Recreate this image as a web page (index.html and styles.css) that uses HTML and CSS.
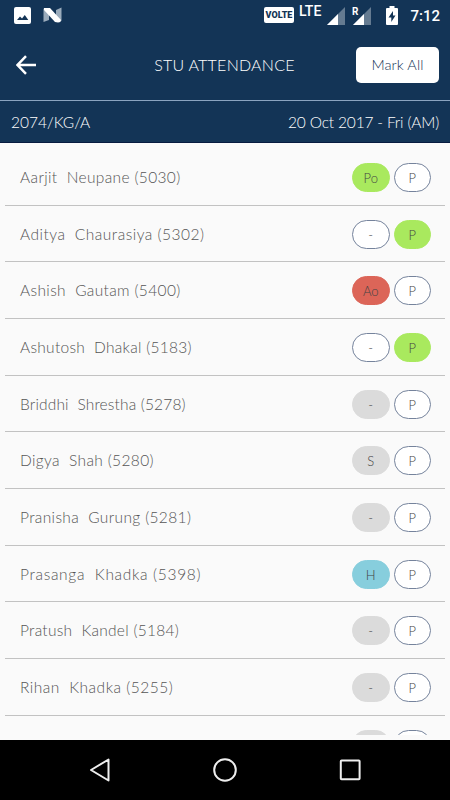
FILE: index.html
```html
<!DOCTYPE html>
<html lang="en">
<head>
  <meta charset="UTF-8">
  <meta name="viewport" content="width=device-width, initial-scale=1.0">
  <title>Stu Attendance</title>
  <link rel="stylesheet" href="styles.css">
</head>
<body>
  <div class="status-bar">
    <svg class="picture-icon" width="17" height="17" viewBox="0 0 17 17">
      <rect width="17" height="17" rx="2" fill="#fff"/>
      <path d="M3 13 L6 9.5 L8 11.5 L10.8 8 L14.3 13 Z" fill="#133456"/>
    </svg>
    <svg class="n-icon" width="19" height="16" viewBox="0 0 19 16">
      <path d="M0.5 1.5 L6 5 V13 L0.5 15 Z M13 3 L18.5 0.5 V14 L13 11 Z" fill="#9aabbb"/>
      <path d="M1 1 H7 L18 13 Q18 15.5 15 15.5 L12 15 L1 3 Z" fill="#fff"/>
    </svg>
    <span class="volte">VOLTE</span>
    <span class="lte">LTE</span>
    <svg class="signal" width="18" height="18" viewBox="0 0 18 18">
      <path d="M18 0 V18 H0 Z" fill="#657b91"/>
      <path d="M11 7 V18 H0 Z" fill="#fff"/>
    </svg>
    <div class="roaming">
      <svg width="18" height="18" viewBox="0 0 18 18">
        <path d="M18 0 V18 H0 Z" fill="#657b91"/>
        <path d="M11 7 V18 H0 Z" fill="#fff"/>
      </svg>
      <span>R</span>
    </div>
    <svg class="battery" width="12" height="19" viewBox="0 0 12 19">
      <path d="M3.5 0 H8.5 V2 H11 Q12 2 12 3 V18 Q12 19 11 19 H1 Q0 19 0 18 V3 Q0 2 1 2 H3.5 Z" fill="#fff"/>
      <path d="M7 5 L2.5 11.5 H5.3 V16 L9.5 9.5 H7 Z" fill="#133456"/>
    </svg>
    <span class="clock">7:12</span>
  </div>

  <div class="toolbar">
    <svg class="back" width="20" height="20" viewBox="0 0 20 20">
      <path d="M10 1.2 L1.5 10 L10 18.8 M1.5 10 H20" fill="none" stroke="#fff" stroke-width="2.5"/>
    </svg>
    <h1>STU ATTENDANCE</h1>
    <button class="mark-all">Mark All</button>
  </div>

  <div class="class-bar">
    <span class="class-name">2074/KG/A</span>
    <span class="date">20 Oct 2017 - Fri (AM)</span>
  </div>

  <div class="list">
    <div class="student"><span class="name">Aarjit  Neupane (5030)</span><span class="pill green">Po</span><span class="pill">P</span></div>
    <div class="student"><span class="name wide">Aditya  Chaurasiya (5302)</span><span class="pill">-</span><span class="pill green">P</span></div>
    <div class="student"><span class="name">Ashish  Gautam (5400)</span><span class="pill red">Ao</span><span class="pill">P</span></div>
    <div class="student"><span class="name tight">Ashutosh  Dhakal (5183)</span><span class="pill">-</span><span class="pill green">P</span></div>
    <div class="student"><span class="name tighter">Briddhi  Shrestha (5278)</span><span class="pill grey">-</span><span class="pill">P</span></div>
    <div class="student"><span class="name">Digya  Shah (5280)</span><span class="pill grey">S</span><span class="pill">P</span></div>
    <div class="student"><span class="name">Pranisha  Gurung (5281)</span><span class="pill grey">-</span><span class="pill">P</span></div>
    <div class="student"><span class="name wider">Prasanga  Khadka (5398)</span><span class="pill blue">H</span><span class="pill">P</span></div>
    <div class="student"><span class="name tight">Pratush  Kandel (5184)</span><span class="pill grey">-</span><span class="pill">P</span></div>
    <div class="student"><span class="name wide">Rihan  Khadka (5255)</span><span class="pill grey">-</span><span class="pill">P</span></div>
    <div class="student"><span class="name"></span><span class="pill grey"></span><span class="pill"></span></div>
  </div>

  <div class="nav-bar">
    <svg width="24" height="26" viewBox="0 0 24 26">
      <path d="M20.5 2.5 V23.5 L3 13 Z" fill="none" stroke="#eee" stroke-width="2" stroke-linejoin="round"/>
    </svg>
    <svg width="24" height="26" viewBox="0 0 24 26">
      <circle cx="12" cy="13" r="10.8" fill="none" stroke="#eee" stroke-width="2"/>
    </svg>
    <svg width="24" height="26" viewBox="0 0 24 26">
      <rect x="2.8" y="3.5" width="18.8" height="18.8" rx="0.8" fill="none" stroke="#eee" stroke-width="2"/>
    </svg>
  </div>
</body>
</html>
```

FILE: styles.css
```css
* {
  box-sizing: border-box;
}
body {
  margin: 0;
  width: 450px;
  height: 800px;
  overflow: hidden;
  display: flex;
  flex-direction: column;
  background: #fafafa;
  font-family: Lato, sans-serif;
  font-weight: 300;
}
svg {
  display: block;
  flex: none;
}
.status-bar {
  height: 30px;
  flex: none;
  display: flex;
  align-items: flex-start;
  padding: 6px 10px 0 14px;
  background: #133456;
  color: #fff;
  font-family: Roboto, sans-serif;
}
.picture-icon {
  margin-top: 1px;
}
.n-icon {
  margin: 1px 0 0 12px;
}
.volte {
  width: 30px;
  height: 16px;
  margin: 1px 0 0 202px;
  border-radius: 2px;
  background: #fff;
  color: #133456;
  font-size: 9px;
  font-weight: 900;
  line-height: 16px;
  text-align: center;
}
.lte {
  width: 23px;
  margin: -2px 0 0 5px;
  font-size: 14px;
  font-weight: 500;
  line-height: 15px;
}
.signal {
  margin: 1px 0 0 5px;
}
.roaming {
  position: relative;
  margin: 1px 0 0 8px;
}
.roaming span {
  position: absolute;
  left: -1px;
  top: 0;
  font-size: 10px;
  font-weight: 700;
  line-height: 9px;
}
.battery {
  margin-left: 15px;
}
.clock {
  margin-left: auto;
  font-size: 15px;
  font-weight: 500;
  line-height: 20px;
}
.toolbar {
  height: 70px;
  flex: none;
  display: flex;
  align-items: center;
  padding: 0 11px 0 16px;
  background: #133456;
}
.toolbar h1 {
  flex: 1;
  margin: 0 0 2px;
  padding-left: 57px;
  color: #fff;
  font-size: 16px;
  font-weight: 300;
  letter-spacing: 0.25px;
  text-align: center;
}
.mark-all {
  width: 83px;
  height: 36px;
  padding: 0 0 1px;
  border: none;
  border-radius: 5px;
  background: #fff;
  color: #133456;
  font-family: Lato, sans-serif;
  font-size: 14.5px;
  font-weight: 300;
  letter-spacing: 0.1px;
}
.class-bar {
  height: 43px;
  flex: none;
  display: flex;
  align-items: center;
  justify-content: space-between;
  padding: 0 11px;
  border-top: 1px solid #8ba4c0;
  border-bottom: 1px solid #071b40;
  background: #133456;
  color: #fff;
  font-size: 15.5px;
}
.date {
  letter-spacing: -0.17px;
}
.list {
  height: 592px;
  flex: none;
  padding: 6px 5px 0;
  overflow: hidden;
}
.student {
  height: 56.68px;
  display: flex;
  align-items: center;
  padding: 1px 14px 0 15px;
  border-bottom: 1px solid #c2c2c2;
}
.name {
  flex: 1;
  margin-bottom: 1px;
  color: #555;
  font-size: 15.5px;
  letter-spacing: 0.36px;
  white-space: pre;
}
.wide {
  letter-spacing: 0.5px;
}
.wider {
  letter-spacing: 0.68px;
}
.tight {
  letter-spacing: 0.28px;
}
.tighter {
  letter-spacing: 0.16px;
}
.pill {
  width: 37.5px;
  height: 29px;
  margin-left: 4px;
  border: 1px solid #75839c;
  border-radius: 15px;
  background: #fff;
  color: #444;
  font-size: 13px;
  line-height: 28px;
  text-align: center;
}
.green {
  border-color: #a9e95e;
  background: #a9e95e;
}
.red {
  border-color: #dc6558;
  background: #dc6558;
}
.grey {
  border-color: #dbdbdb;
  background: #dbdbdb;
}
.blue {
  border-color: #87cedd;
  background: #87cedd;
}
.nav-bar {
  height: 60px;
  flex: none;
  margin-top: auto;
  display: flex;
  align-items: center;
  justify-content: center;
  gap: 101px;
  background: #000;
}
```
